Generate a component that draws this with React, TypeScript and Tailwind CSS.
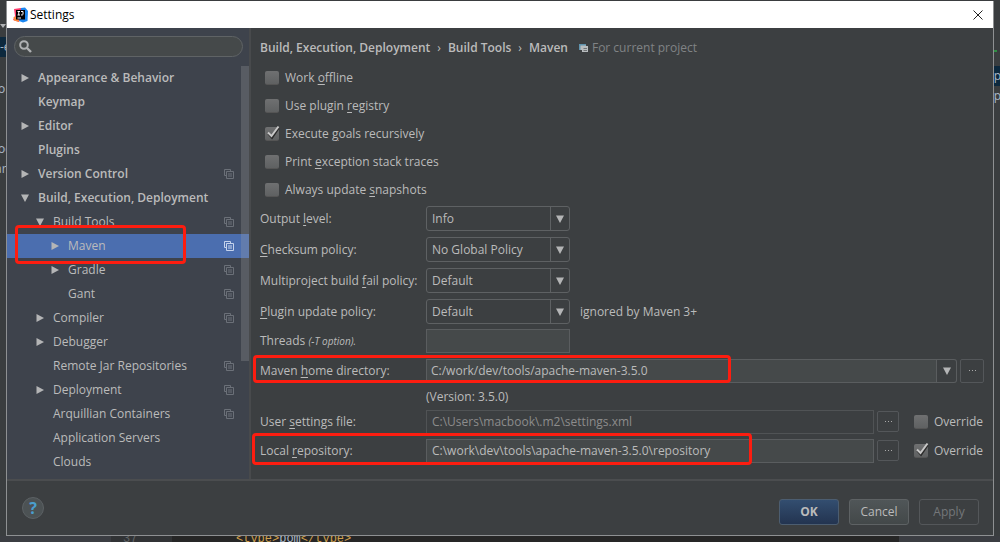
import type { ReactNode } from 'react';

type TreeItem = {
  label: string;
  level: 0 | 1 | 2;
  arrow?: 'open' | 'closed';
  project?: boolean;
  selected?: boolean;
};

const treeItems: TreeItem[] = [
  { label: 'Appearance & Behavior', level: 0, arrow: 'closed' },
  { label: 'Keymap', level: 0 },
  { label: 'Editor', level: 0, arrow: 'closed' },
  { label: 'Plugins', level: 0 },
  { label: 'Version Control', level: 0, arrow: 'closed', project: true },
  { label: 'Build, Execution, Deployment', level: 0, arrow: 'open' },
  { label: 'Build Tools', level: 1, arrow: 'open', project: true },
  { label: 'Maven', level: 2, arrow: 'closed', project: true, selected: true },
  { label: 'Gradle', level: 2, arrow: 'closed', project: true },
  { label: 'Gant', level: 2, project: true },
  { label: 'Compiler', level: 1, arrow: 'closed', project: true },
  { label: 'Debugger', level: 1, arrow: 'closed' },
  { label: 'Remote Jar Repositories', level: 1, project: true },
  { label: 'Deployment', level: 1, arrow: 'closed', project: true },
  { label: 'Arquillian Containers', level: 1, project: true },
  { label: 'Application Servers', level: 1 },
  { label: 'Clouds', level: 1 },
];

const levelPadding = ['pl-[14px]', 'pl-[29px]', 'pl-[44px]'];

// "_" marks the mnemonic letter that follows it
const options = [
  { id: 'offline', label: 'Work _offline', checked: false },
  { id: 'registry', label: 'Use plugin _registry', checked: false },
  { id: 'recursive', label: 'Execute _goals recursively', checked: true },
  { id: 'traces', label: 'Print _exception stack traces', checked: false },
  { id: 'snapshots', label: 'Always update _snapshots', checked: false },
];

const policies = [
  { id: 'output', label: 'Output _level:', value: 'Info' },
  { id: 'checksum', label: '_Checksum policy:', value: 'No Global Policy' },
  { id: 'fail', label: 'Multiproject build _fail policy:', value: 'Default' },
  { id: 'update', label: '_Plugin update policy:', value: 'Default', note: 'ignored by Maven 3+' },
];

const fieldClass =
  'h-6 min-w-0 border border-[#5a5d5f] bg-[#45494a] text-[#bbbbbb] outline-none';

function Mnemonic({ text }: { text: string }) {
  const [before, rest = ''] = text.split('_');
  return (
    <>
      {before}
      <span className="underline underline-offset-2">{rest.slice(0, 1)}</span>
      {rest.slice(1)}
    </>
  );
}

function Arrow({ open }: { open: boolean }) {
  return (
    <svg viewBox="0 0 8 8" className="h-2 w-2 fill-[#b4b5b6]" aria-hidden="true">
      <path d={open ? 'M0 0.5H8L4 8Z' : 'M0.5 0L8 4L0.5 8Z'} />
    </svg>
  );
}

function ProjectIcon({ className }: { className: string }) {
  return (
    <svg viewBox="0 0 10 10" className={`h-[10px] w-[10px] shrink-0 ${className}`} fill="none" stroke="currentColor" aria-hidden="true">
      <path d="M2 6.5H0.5V0.5H6.5V2" />
      <path d="M2.5 2.5H9.5V9.5H2.5Z" />
      <path d="M4 5H8M4 7H8" />
    </svg>
  );
}

function ProjectBadge() {
  return (
    <svg viewBox="0 0 10 10" className="h-[10px] w-[10px] shrink-0" aria-hidden="true">
      <path d="M0 1H7V3H3V7H0Z" fill="#5f93ad" />
      <path d="M1.5 2.5H7V3H3V7H1.5Z" fill="#b9bdbf" />
      <path d="M3 3H9V9H3Z" fill="#b9bdbf" />
      <path d="M4.5 5.5H8M4.5 7.5H8" stroke="#5d6163" strokeWidth="0.8" />
    </svg>
  );
}

function Highlight({ className }: { className: string }) {
  return <div className={`pointer-events-none absolute rounded-[4px] border-3 border-[#fd1d10] ${className}`} />;
}

function CheckBox({ id, checked, children }: { id: string; checked: boolean; children: ReactNode }) {
  return (
    <div className="flex items-center gap-[6px]">
      <span className="relative flex">
        <input
          id={id}
          type="checkbox"
          defaultChecked={checked}
          className="peer h-[14px] w-[14px] appearance-none rounded-[2px] border-b border-[#555555] bg-linear-to-b from-[#6f7071] to-[#5f6162]"
        />
        <svg viewBox="0 0 16 16" className="pointer-events-none absolute -top-[2px] left-0 hidden h-4 w-4 peer-checked:block" fill="none" aria-hidden="true">
          <path d="M3.5 8.5L7 12.5L13.5 3" stroke="#2b2b2b" strokeWidth="2.4" />
          <path d="M3 7.5L6.5 11L13.5 1.5" stroke="#c8c8c8" strokeWidth="2" />
        </svg>
      </span>
      <label htmlFor={id}>{children}</label>
    </div>
  );
}

function BrowseButton({ label, className }: { label: string; className: string }) {
  return (
    <button
      type="button"
      aria-label={label}
      className={`flex shrink-0 items-center justify-center gap-[2px] rounded-[2px] border border-[#54575a] ${className}`}
    >
      <i className="h-px w-px bg-[#aaaaaa]" />
      <i className="h-px w-px bg-[#aaaaaa]" />
      <i className="h-px w-px bg-[#aaaaaa]" />
    </button>
  );
}

function Backdrop() {
  return (
    <div aria-hidden="true" className="absolute inset-0 overflow-hidden bg-[#3a3d3f] text-[#a9b7c6]">
      <div className="absolute top-[37px] left-0 h-5 w-2 bg-[#0d293e]" />
      <div className="absolute top-[66px] right-0 h-5 w-2 bg-[#0d293e]" />
      <span className="absolute top-[39px] left-0 text-xs">-e</span>
      <span className="absolute top-[81px] -left-[2px] text-xs">o</span>
      <span className="absolute top-[141px] -left-[2px] text-xs">oc</span>
      <span className="absolute top-[161px] -left-[5px] text-xs">ar</span>
      <i className="absolute top-[24px] left-0 border-x-3 border-t-4 border-x-transparent border-t-[#afb1b3]" />
      <span className="absolute top-[68px] -right-[1px] text-xs">p</span>
      <span className="absolute top-[88px] -right-[1px] text-xs">p</span>
      <i className="absolute top-[50px] right-[3px] h-[2px] w-[3px] bg-[#2f8f43]" />
      <div className="absolute inset-x-0 bottom-0 flex h-[6px] overflow-hidden font-['Liberation_Mono'] text-xs leading-3">
        <div className="w-[111px] bg-[#3b3d42]" />
        <div className="flex w-[61px] items-center bg-[#313335] pl-3 text-[#606366]">37</div>
        <div className="flex grow items-center bg-[#262626] pl-16 text-[#d0a04c]">
          &lt;type&gt;<span className="text-[#a9b7c6]">pom</span>&lt;/type&gt;
        </div>
        <div className="w-[101px] bg-[#3b3d42]" />
      </div>
    </div>
  );
}

function TitleBar() {
  return (
    <header className="flex h-[27px] shrink-0 items-center bg-white pl-[6px] text-black">
      <svg viewBox="0 0 16 16" className="h-4 w-4" aria-hidden="true">
        <path d="M1 2L8 1L9 8L6 15L0 13L2 9Z" fill="#fc3b6b" />
        <path d="M0.5 10L5 9L6 15L1 13.5Z" fill="#fb8a3c" />
        <path d="M8 1L12 0.5L15 4L14.5 14L10 15.5L6 14Z" fill="#1a86f0" />
        <path d="M3 3H12V12.5H3Z" fill="#000000" />
        <path d="M4.5 4.5H7M5.75 4.5V8M4.5 8H7M8 4.5H10V7.5Q10 8 8 8M4.5 11H8" stroke="#ffffff" fill="none" />
      </svg>
      <h1 className="ml-px grow text-xs">Settings</h1>
      <button type="button" aria-label="Close" className="flex h-full w-[30px] items-center justify-center">
        <svg viewBox="0 0 10 10" className="h-[10px] w-[10px]" stroke="#222222" aria-hidden="true">
          <path d="M0.5 0.5L9.5 9.5M9.5 0.5L0.5 9.5" />
        </svg>
      </button>
    </header>
  );
}

function Sidebar() {
  return (
    <aside className="flex w-[242px] shrink-0 flex-col bg-[#3e434c]">
      <div className="mt-2 mr-[6px] ml-[7px] flex h-[21px] items-center rounded-full border border-[#5f6365] bg-[#45494a] pl-1">
        <svg viewBox="0 0 13 13" className="h-[13px] w-[13px]" fill="none" stroke="#afb1b3" strokeWidth="2" aria-hidden="true">
          <circle cx="5" cy="5" r="3.8" />
          <path d="M8 8L12 12" strokeWidth="2.4" />
        </svg>
        <input type="search" aria-label="Search settings" className="min-w-0 grow bg-transparent px-1 outline-none" />
      </div>
      <nav aria-label="Settings" className="relative mt-[9px] pb-1">
        <ul>
          {treeItems.map((item) => (
            <li key={item.label} className={`relative ${item.selected ? 'bg-[#4b6eaf]' : ''}`}>
              <a
                href="#settings"
                aria-current={item.selected ? 'page' : undefined}
                className={`flex h-6 items-center pr-[15px] pb-px ${levelPadding[item.level]}`}
              >
                <span className="w-[17px] shrink-0">{item.arrow && <Arrow open={item.arrow === 'open'} />}</span>
                <span className={`grow whitespace-nowrap ${item.level === 0 ? 'font-semibold' : ''}`}>{item.label}</span>
                {item.project && <ProjectIcon className={item.selected ? 'text-[#c5d3ec]' : 'text-[#6b7078]'} />}
              </a>
              {item.selected && <Highlight className="-top-[9px] left-2 z-10 h-[39px] w-[171px]" />}
            </li>
          ))}
        </ul>
        <div className="absolute top-0 right-0 h-[295px] w-2 bg-[#a6a6a6]/25" />
      </nav>
    </aside>
  );
}

function MavenForm() {
  return (
    <main className="min-w-0 grow border-l-2 border-[#484a4c] pt-1 pr-[9px] pl-[9px]">
      <h2 className="flex h-[31px] items-center gap-[7px] font-semibold whitespace-nowrap">
        <span>Build, Execution, Deployment</span>
        <span className="font-normal">›</span>
        <span>Build Tools</span>
        <span className="font-normal">›</span>
        <span>Maven</span>
        <span className="ml-1 flex items-center gap-[3px] font-normal text-[#808385]">
          <ProjectBadge />
          For current project
        </span>
      </h2>

      <div className="pl-[5px]">
        {options.map((option) => (
          <div key={option.id} className="flex h-7 items-center pt-[2px]">
            <CheckBox id={option.id} checked={option.checked}>
              <Mnemonic text={option.label} />
            </CheckBox>
          </div>
        ))}
      </div>

      {policies.map((policy) => (
        <div key={policy.id} className="flex h-[31px] items-center">
          <label htmlFor={policy.id} className="w-[166px] shrink-0">
            <Mnemonic text={policy.label} />
          </label>
          <div className="relative h-[25px] w-36">
            <select
              id={policy.id}
              className="h-full w-full appearance-none rounded-[3px] border border-[#5e6163] bg-[#3c3f41] pl-[5px] text-[#bbbbbb] outline-none"
            >
              <option>{policy.value}</option>
            </select>
            <span className="pointer-events-none absolute inset-y-0 right-0 flex w-5 items-center justify-center border-l border-[#5e6163] pr-[2px]">
              <Arrow open />
            </span>
          </div>
          {policy.note && <span className="ml-[10px]">{policy.note}</span>}
        </div>
      ))}

      <div className="flex h-[27px] items-center">
        <label htmlFor="threads" className="w-[166px] shrink-0">
          Threads <i className="text-[10px]">(-T option).</i>
        </label>
        <input id="threads" type="text" className={`w-36 px-[5px] ${fieldClass}`} />
      </div>

      <div className="relative flex h-[33px] items-center">
        <label htmlFor="home" className="w-[166px] shrink-0">
          <Mnemonic text="Maven _home directory:" />
        </label>
        <input id="home" type="text" defaultValue="C:/work/dev/tools/apache-maven-3.5.0" className={`grow px-1 ${fieldClass}`} />
        <button
          type="button"
          aria-label="Recent Maven homes"
          className="flex h-6 w-5 shrink-0 items-center justify-center rounded-r-[3px] border border-l-0 border-[#5a5d5f]"
        >
          <Arrow open />
        </button>
        <BrowseButton label="Browse Maven home" className="ml-[3px] h-6 w-6" />
        <Highlight className="top-px -left-[7px] h-7 w-[478px]" />
      </div>
      <p className="flex h-[19px] items-center pl-[166px]">(Version: 3.5.0)</p>

      <div className="flex h-[31px] items-center pr-px">
        <label htmlFor="user-settings" className="w-[166px] shrink-0">
          <Mnemonic text="User _settings file:" />
        </label>
        <input
          id="user-settings"
          type="text"
          disabled
          defaultValue="C:\Users\macbook\.m2\settings.xml"
          className="h-6 min-w-0 grow border border-[#505355] bg-[#3c3f41] px-[5px] text-[#8c8c8c]"
        />
        <BrowseButton label="Browse settings file" className="mr-[15px] ml-[3px] h-[21px] w-[22px]" />
        <CheckBox id="override-settings" checked={false}>Override</CheckBox>
      </div>

      <div className="relative flex h-[27px] items-center pr-px">
        <label htmlFor="repository" className="w-[166px] shrink-0">
          <Mnemonic text="Local _repository:" />
        </label>
        <input
          id="repository"
          type="text"
          defaultValue="C:\work\dev\tools\apache-maven-3.5.0\repository"
          className={`grow px-[5px] ${fieldClass}`}
        />
        <BrowseButton label="Browse repository" className="mr-[15px] ml-[3px] h-[21px] w-[22px]" />
        <CheckBox id="override-repository" checked>Override</CheckBox>
        <Highlight className="-top-1 -left-2 h-8 w-[500px]" />
      </div>
    </main>
  );
}

function Footer() {
  return (
    <footer className="flex h-[56px] shrink-0 items-start border-t-2 border-[#4b4d4f] pt-4 pr-[14px] pl-[15px]">
      <button
        type="button"
        aria-label="Help"
        className="mr-auto flex h-[22px] w-[22px] items-center justify-center rounded-full border border-[#5c6164] bg-[#4c5254] text-base font-bold text-[#4a9fce]"
      >
        ?
      </button>
      <div className="flex gap-[10px] pt-[2px]">
        <button type="button" className="h-[26px] w-[60px] rounded-[3px] border border-[#4c5d70] bg-linear-to-b from-[#334e70] to-[#233450] font-bold">
          OK
        </button>
        <button type="button" className="h-[26px] w-[60px] rounded-[3px] border border-[#5e6264] bg-linear-to-b from-[#505658] to-[#434849]">
          Cancel
        </button>
        <button type="button" disabled className="h-[26px] w-[60px] rounded-[3px] border border-[#54575a] text-[#74777a]">
          Apply
        </button>
      </div>
    </footer>
  );
}

export default function App() {
  return (
    <div className="relative flex min-h-screen flex-col px-[6px] pt-px pb-[6px] font-['Open_Sans','Noto_Sans',sans-serif] text-xs text-[#bbbbbb]">
      <Backdrop />
      <div role="dialog" aria-label="Settings" className="relative flex grow flex-col border border-t-0 border-[#8e9092] bg-[#3c3f41]">
        <TitleBar />
        <div className="flex grow">
          <Sidebar />
          <MavenForm />
        </div>
        <Footer />
      </div>
    </div>
  );
}
